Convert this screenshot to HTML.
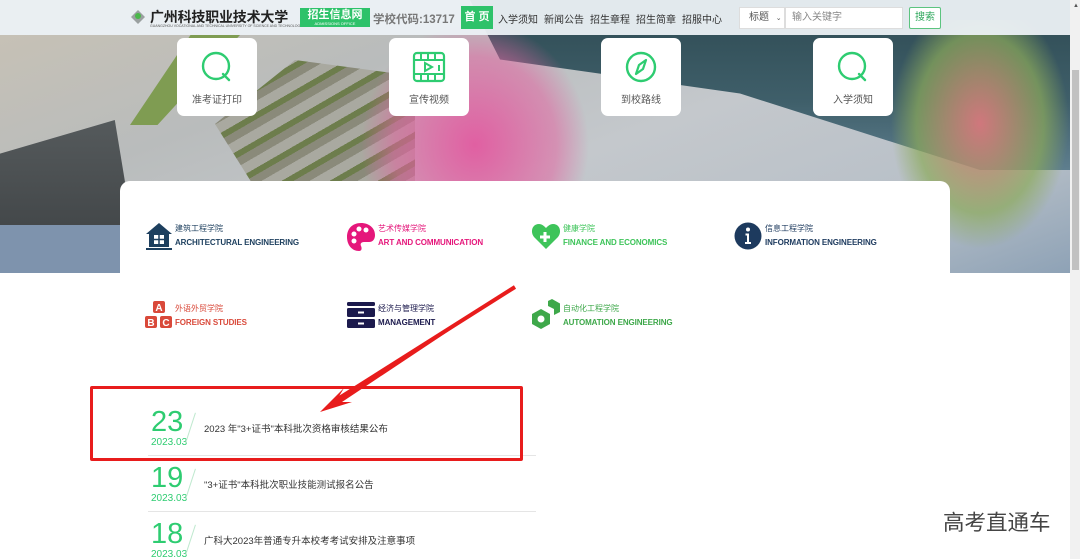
<!DOCTYPE html>
<html><head><meta charset="utf-8">
<style>
*{margin:0;padding:0;box-sizing:border-box}
html,body{width:1080px;height:559px;overflow:hidden}
body{background:#fff;font-family:"Liberation Sans","Noto Sans CJK SC",sans-serif;position:relative}
.abs{position:absolute}
#photo{left:0;top:0;width:1070px;height:273px;overflow:hidden;background:linear-gradient(160deg,#c9c2b4 0%,#b9bcbc 30%,#c4c8cc 55%,#b8c0c8 80%,#8ea2b6 100%);}
#lake{left:470px;top:0;width:600px;height:170px;background:linear-gradient(180deg,#2e4a52,#3f5f6a 60%,#5e7e8e);clip-path:polygon(0 0,100% 0,100% 100%,85% 100%,45% 55%,5% 35%)}
#road{left:0;top:120px;width:140px;height:153px;background:linear-gradient(180deg,#555a5c,#3c4042);clip-path:polygon(0 22%,82% 0,100% 100%,0 100%)}
#road2{left:0;top:225px;width:175px;height:48px;background:#7e93ad}
#grass{left:130px;top:35px;width:110px;height:90px;background:#7f9c52;clip-path:polygon(55% 0,100% 0,25% 100%,0 100%)}
#steps{left:215px;top:60px;width:200px;height:160px;background:repeating-linear-gradient(150deg,#8a8a7a 0 8px,#a9a9a0 8px 18px,#6d7d4c 18px 24px);clip-path:polygon(40% 0,100% 10%,100% 100%,30% 100%,0 40%)}
#tree1{left:360px;top:20px;width:230px;height:250px;background:radial-gradient(ellipse at 50% 50%,rgba(226,90,160,.95),rgba(226,100,160,.55) 50%,rgba(226,100,160,0) 70%)}
#tree2{left:890px;top:20px;width:180px;height:230px;background:radial-gradient(ellipse at 50% 45%,rgba(215,120,125,.95),rgba(140,170,90,.7) 50%,rgba(0,0,0,0) 70%)}
#header{left:0;top:0;width:1070px;height:35px;background:rgba(236,241,246,.95)}
.card{position:absolute;top:38px;width:80px;height:78px;background:#fff;border-radius:7px;text-align:center;font-size:10px;color:#555}
.card svg{margin-top:12px}
.card span{position:absolute;left:0;right:0;top:53px}
#panel{left:120px;top:181px;width:830px;height:100px;background:#fff;border-radius:10px 10px 0 0}
.col{position:absolute;font-size:8px;line-height:14px}
.col .en{font-size:8px;font-weight:bold;letter-spacing:-.1px}
.col svg{position:absolute;left:0;top:0}
.col .t{position:absolute;left:30px;top:0;white-space:nowrap}
.nav{position:absolute;top:11px;font-size:10px;color:#333}
.news{position:absolute;left:148px;width:388px;height:56px;border-bottom:1px solid #e5e5e5}
.news .d{position:absolute;left:3px;top:6px;font-size:29px;color:#2ecc71}
.news .y{position:absolute;left:3px;top:37px;font-size:10px;color:#2ecc71}
.news .sl{position:absolute;left:42px;top:12px;width:1px;height:32px;background:#bfe9cf;transform:rotate(18deg)}
.news .tt{position:absolute;left:56px;top:21px;font-size:9.5px;color:#333;white-space:nowrap}
</style></head><body>
<div id="photo" class="abs">
<div id="lake" class="abs"></div>
<div id="grass" class="abs"></div>
<div id="steps" class="abs"></div>
<div id="road" class="abs"></div>
<div id="road2" class="abs"></div>
<div id="tree1" class="abs"></div>
<div id="tree2" class="abs"></div>
</div>
<div id="header" class="abs"></div>
<svg class="abs" style="left:130px;top:9px" width="16" height="16" viewBox="0 0 16 16"><path d="M8 1 L15 8 L8 15 L1 8Z" fill="#9aa0a0"/><circle cx="8" cy="7" r="3" fill="#4ab84a"/></svg>
<div class="abs" style="left:150px;top:7px;font-size:14px;font-weight:bold;color:#222;letter-spacing:-.2px">广州科技职业技术大学</div>
<div class="abs" style="left:150px;top:24px;font-size:3.5px;color:#555;white-space:nowrap">GUANGZHOU VOCATIONAL AND TECHNICAL UNIVERSITY OF SCIENCE AND TECHNOLOGY</div>
<div class="abs" style="left:300px;top:8px;width:70px;height:19px;background:#2ec26a;color:#fff;text-align:center;font-weight:bold;font-size:11px;line-height:12px;padding-top:1px">招生信息网<div style="font-size:4px;line-height:5px;font-weight:normal">ADMISSIONS OFFICE</div></div>
<div class="abs" style="left:373px;top:11px;font-size:11.5px;font-weight:bold;color:#777">学校代码:13717</div>
<div class="abs" style="left:461px;top:6px;width:32px;height:23px;background:#2ec26a;color:#fff;font-size:11px;font-weight:bold;text-align:center;line-height:23px">首 页</div>
<div class="nav" style="left:498px">入学须知</div>
<div class="nav" style="left:544px">新闻公告</div>
<div class="nav" style="left:590px">招生章程</div>
<div class="nav" style="left:636px">招生简章</div>
<div class="nav" style="left:682px">招服中心</div>
<div class="abs" style="left:739px;top:7px;width:46px;height:22px;background:#fff;border:1px solid #ddd;font-size:10px;color:#555;line-height:20px;padding-left:9px">标题 <span style="font-size:7px;margin-left:4px">⌄</span></div>
<div class="abs" style="left:785px;top:7px;width:118px;height:22px;background:#fff;border:1px solid #ddd;font-size:10px;color:#888;line-height:20px;padding-left:6px">输入关键字</div>
<div class="abs" style="left:909px;top:7px;width:32px;height:22px;background:#fff;border:1px solid #5cc47f;font-size:10px;color:#2ea85c;line-height:20px;text-align:center;border-radius:2px">搜索</div>

<div class="card" style="left:177px"><svg width="34" height="34" viewBox="0 0 34 34"><circle cx="16" cy="16" r="13" fill="none" stroke="#2ecc71" stroke-width="2.4"/><path d="M23 24 L29 30" stroke="#2ecc71" stroke-width="2.4" stroke-linecap="round"/></svg><span>准考证打印</span></div>
<div class="card" style="left:389px"><svg width="34" height="34" viewBox="0 0 34 34"><rect x="2" y="3" width="30" height="28" rx="3" fill="none" stroke="#2ecc71" stroke-width="2.2"/><path d="M2 10H32M2 24H32M9 3V10M16 3V10M23 3V10M9 24V31M16 24V31M23 24V31" stroke="#2ecc71" stroke-width="2"/><path d="M13 13 L20 17 L13 21Z" fill="none" stroke="#2ecc71" stroke-width="2"/><path d="M27 15V21" stroke="#2ecc71" stroke-width="2"/></svg><span>宣传视频</span></div>
<div class="card" style="left:601px"><svg width="34" height="34" viewBox="0 0 34 34"><circle cx="17" cy="17" r="14" fill="none" stroke="#2ecc71" stroke-width="2.4"/><path d="M22 10 L19 19 L12 24 L15 15Z" fill="none" stroke="#2ecc71" stroke-width="2.2" stroke-linejoin="round"/></svg><span>到校路线</span></div>
<div class="card" style="left:813px"><svg width="34" height="34" viewBox="0 0 34 34"><circle cx="16" cy="16" r="13" fill="none" stroke="#2ecc71" stroke-width="2.4"/><path d="M23 24 L29 30" stroke="#2ecc71" stroke-width="2.4" stroke-linecap="round"/></svg><span>入学须知</span></div>

<div id="panel" class="abs"></div>

<div class="col" style="left:145px;top:222px;color:#1d3f5e"><svg width="28" height="28" viewBox="0 0 28 28"><path d="M14 1 L27 12 H24 V25 H4 V12 H1Z" fill="#1d3f5e"/><rect x="9" y="13" width="10" height="9" fill="#fff"/><path d="M14 13V22M9 17.5H19" stroke="#1d3f5e" stroke-width="1.5"/><rect x="1" y="26" width="26" height="2" fill="#1d3f5e"/></svg><div class="t">建筑工程学院<br><span class="en">ARCHITECTURAL ENGINEERING</span></div></div>
<div class="col" style="left:346px;top:222px;color:#e5177b"><svg width="30" height="30" viewBox="0 0 30 30"><path d="M15 1C6 1 1 7 1 15s5 14 12 14c3 0 3-3 2-5-1-2 0-4 3-4h5c4 0 6-3 6-7C29 6 23 1 15 1Z" fill="#e5177b"/><circle cx="8" cy="12" r="2.5" fill="#fff"/><circle cx="13" cy="7" r="2.5" fill="#fff"/><circle cx="20" cy="8" r="2.5" fill="#fff"/><circle cx="8" cy="19" r="2.5" fill="#fff"/></svg><div class="t" style="left:32px">艺术传媒学院<br><span class="en">ART AND COMMUNICATION</span></div></div>
<div class="col" style="left:531px;top:222px;color:#3ec45a"><svg width="30" height="28" viewBox="0 0 30 28"><path d="M15 27 L3 15C-1 10 1 2 8 2c3 0 5 2 7 4 2-2 4-4 7-4 7 0 9 8 5 13Z" fill="#3ec45a"/><path d="M14 10V20M9 15H19" stroke="#fff" stroke-width="3"/></svg><div class="t" style="left:32px">健康学院<br><span class="en">FINANCE AND ECONOMICS</span></div></div>
<div class="col" style="left:734px;top:222px;color:#1d3a5e"><svg width="28" height="28" viewBox="0 0 28 28"><circle cx="14" cy="14" r="13.5" fill="#1d3a5e"/><circle cx="14" cy="7.5" r="2" fill="#fff"/><path d="M11.5 11.5H15V20H17V22H11V20H13V13.5H11.5Z" fill="#fff"/></svg><div class="t" style="left:31px">信息工程学院<br><span class="en">INFORMATION ENGINEERING</span></div></div>

<div class="col" style="left:145px;top:301px;color:#d9493a"><svg width="28" height="28" viewBox="0 0 28 28"><rect x="8" y="0" width="12" height="12" rx="2" fill="#d9493a"/><rect x="0" y="15" width="12" height="12" rx="2" fill="#d9493a"/><rect x="15" y="15" width="12" height="12" rx="2" fill="#d9493a"/><text x="14" y="10" font-size="10" fill="#fff" text-anchor="middle" font-weight="bold" font-family="Liberation Sans">A</text><text x="6" y="25" font-size="10" fill="#fff" text-anchor="middle" font-weight="bold" font-family="Liberation Sans">B</text><text x="21" y="25" font-size="10" fill="#fff" text-anchor="middle" font-weight="bold" font-family="Liberation Sans">C</text></svg><div class="t" style="top:1px">外语外贸学院<br><span class="en">FOREIGN STUDIES</span></div></div>
<div class="col" style="left:346px;top:302px;color:#1c1a4d"><svg width="30" height="26" viewBox="0 0 30 26"><rect x="1" y="0" width="28" height="4" rx="1.5" fill="#1c1a4d"/><rect x="1" y="6" width="28" height="9" rx="1.5" fill="#1c1a4d"/><rect x="1" y="17" width="28" height="9" rx="1.5" fill="#1c1a4d"/><rect x="12" y="9.5" width="6" height="2" fill="#fff"/><rect x="12" y="20.5" width="6" height="2" fill="#fff"/></svg><div class="t" style="left:32px;top:0px">经济与管理学院<br><span class="en">MANAGEMENT</span></div></div>
<div class="col" style="left:531px;top:299px;color:#3ea84a"><svg width="30" height="30" viewBox="0 0 30 30"><path d="M10 10 L19 15 V25 L10 30 L1 25 V15Z" fill="#3ea84a"/><circle cx="10" cy="20" r="3.5" fill="#fff"/><path d="M21 0 L29 4.5 V13 L23 16 V10 L17 7 V2Z" fill="#3ea84a"/></svg><div class="t" style="left:32px;top:3px">自动化工程学院<br><span class="en">AUTOMATION ENGINEERING</span></div></div>

<div class="news" style="top:400px"><div class="d">23</div><div class="y">2023.03</div><div class="sl"></div><div class="tt">2023 年"3+证书"本科批次资格审核结果公布</div></div>
<div class="news" style="top:456px"><div class="d">19</div><div class="y">2023.03</div><div class="sl"></div><div class="tt">"3+证书"本科批次职业技能测试报名公告</div></div>
<div class="news" style="top:512px"><div class="d">18</div><div class="y">2023.03</div><div class="sl"></div><div class="tt">广科大2023年普通专升本校考考试安排及注意事项</div></div>

<div class="abs" style="left:90px;top:386px;width:433px;height:75px;border:3px solid #e81c1c;border-radius:2px"></div>
<svg class="abs" style="left:0;top:0" width="1080" height="559"><path d="M515 287 L338 398 L344 388 L320 412 L352 402 L342 402 Z" fill="#e81c1c"/><path d="M515 287 L333 402" stroke="#e81c1c" stroke-width="4"/></svg>

<div class="abs" style="left:943px;top:506px;font-size:21.5px;color:#444">高考直通车</div>

<div class="abs" style="left:1070px;top:0;width:10px;height:559px;background:#f1f1f1"></div>
<div class="abs" style="left:1072px;top:70px;width:7px;height:200px;background:#c1c1c1"></div>
<div class="abs" style="left:1073px;top:3px;font-size:6px;color:#555">▲</div>
</body></html>
